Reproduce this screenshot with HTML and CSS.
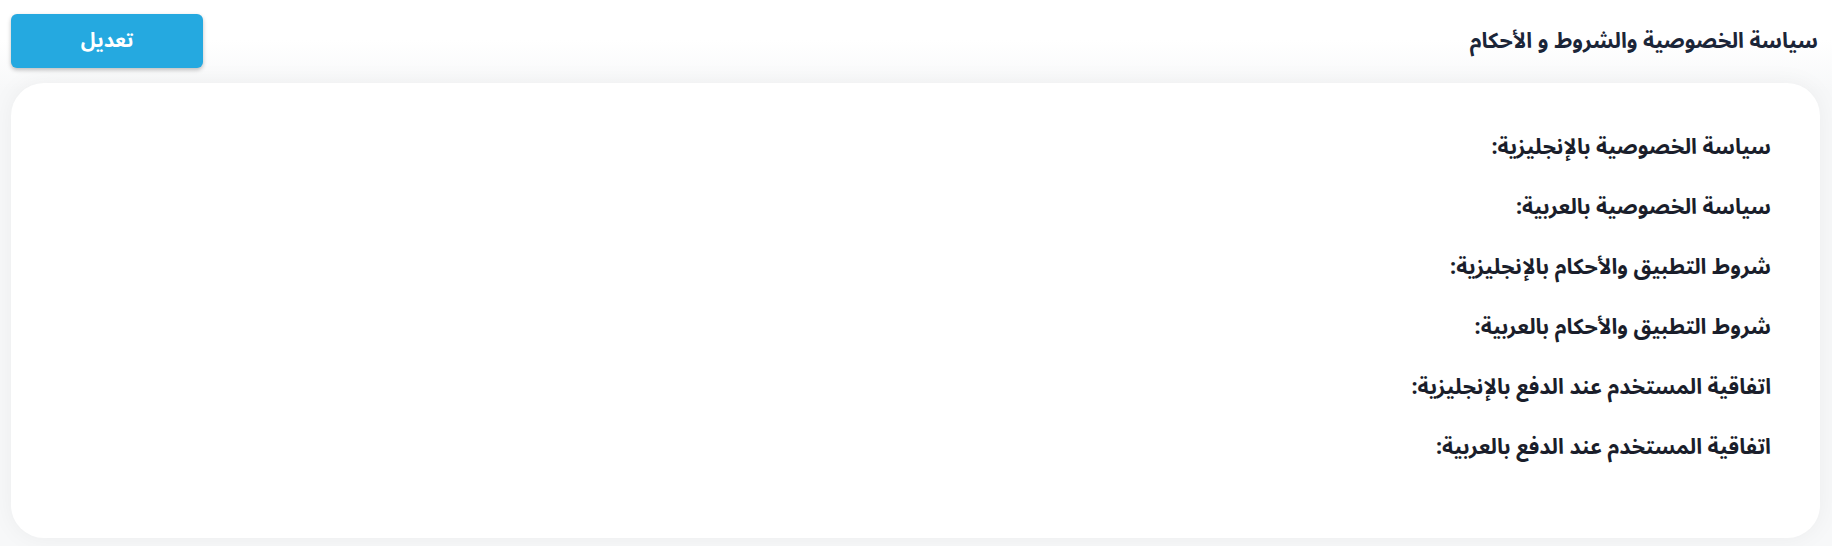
FILE: index.html
```html
<!DOCTYPE html>
<html lang="ar" dir="rtl">
<head>
  <meta charset="UTF-8">
  <meta name="viewport" content="width=device-width, initial-scale=1.0">
  <title>سياسة الخصوصية والشروط و الأحكام</title>
  <link rel="stylesheet" href="styles.css">
</head>
<body>
  <div class="page">
    <div class="page-header">
      <h1 class="page-title">سياسة الخصوصية والشروط و الأحكام</h1>
      <button class="edit-btn">تعديل</button>
    </div>

    <!-- policies card -->
    <div class="card">
      <p class="policy-label">سياسة الخصوصية بالإنجليزية:</p>
      <p class="policy-label">سياسة الخصوصية بالعربية:</p>
      <p class="policy-label">شروط التطبيق والأحكام بالإنجليزية:</p>
      <p class="policy-label">شروط التطبيق والأحكام بالعربية:</p>
      <p class="policy-label">اتفاقية المستخدم عند الدفع بالإنجليزية:</p>
      <p class="policy-label">اتفاقية المستخدم عند الدفع بالعربية:</p>
    </div>
  </div>
</body>
</html>
```

FILE: styles.css
```css
body {
  margin: 0;
  background-color: #f7f8f9;
  font-family: "Noto Sans Arabic", "Noto Sans", "DejaVu Sans", sans-serif;
  color: #1e2433;
}

.page {
  padding: 14px 12px 8px 11px;
  background: linear-gradient(#ffffff 40px, #f7f8f9 90px);
}

.page-header {
  display: flex;
  justify-content: space-between;
  align-items: center;
  height: 54px;
  margin-bottom: 15px;
}

.page-title {
  margin: 0;
  padding-right: 2px;
  font-size: 21.5px;
  font-weight: 700;
  color: #1b2538;
}

.edit-btn {
  width: 192px;
  height: 54px;
  border: none;
  border-radius: 6px;
  background-color: #25a9e0;
  color: #ffffff;
  font-family: inherit;
  font-size: 20px;
  font-weight: 700;
  box-shadow: 0 2px 4px rgba(0, 0, 0, 0.25);
  cursor: pointer;
}

.card {
  background-color: #ffffff;
  border-radius: 33px;
  box-shadow: 0 0 24px rgba(0, 0, 0, 0.05);
  height: 455px;
  box-sizing: border-box;
  padding: 34px 49px 0 0;
  display: flex;
  flex-direction: column;
}

.policy-label {
  margin: 0;
  height: 60px;
  line-height: 60px;
  font-size: 21.5px;
  font-weight: 700;
  color: #1a1e2b;
}
```
